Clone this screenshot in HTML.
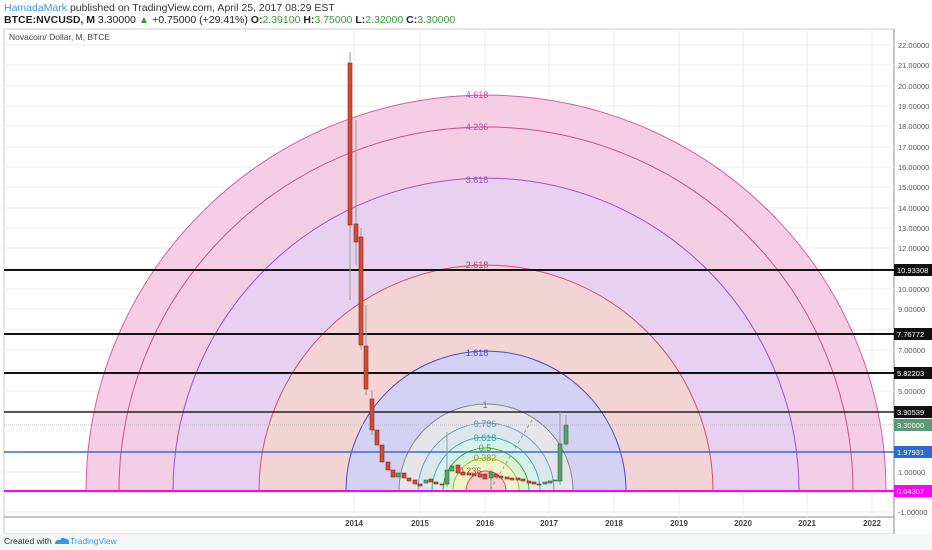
<!DOCTYPE html>
<html><head><meta charset="utf-8"><style>
body{margin:0;width:932px;height:550px;background:#fff;font-family:"Liberation Sans",sans-serif;overflow:hidden;position:relative}
.t{position:absolute;white-space:nowrap}
</style></head><body>
<div class="t" style="left:4px;top:2px;font-size:10.5px;color:#333"><span style="color:#3b9ad9">HamadaMark</span> published on TradingView.com, April 25, 2017 08:29 EST</div>
<div class="t" style="left:4px;top:14px;font-size:10.5px;color:#222"><b>BTCE:NVCUSD, M</b> 3.30000 <span style="color:#3c9a3c">▲</span> +0.75000 (+29.41%) <b>O:</b><span style="color:#3c9a3c">2.39100</span> <b>H:</b><span style="color:#3c9a3c">3.75000</span> <b>L:</b><span style="color:#3c9a3c">2.32000</span> <b>C:</b><span style="color:#3c9a3c">3.30000</span></div>
<svg width="932" height="550" style="position:absolute;left:0;top:0" font-family="Liberation Sans,sans-serif">
<rect x="4" y="29" width="890" height="505" fill="none" stroke="#ccc"/>
<line x1="4" y1="517" x2="894" y2="517" stroke="#888"/>
<line x1="894" y1="29" x2="894" y2="534" stroke="#888"/>
<g stroke="#eee">
<line x1="4" y1="45" x2="894" y2="45"/><line x1="4" y1="65" x2="894" y2="65"/><line x1="4" y1="86" x2="894" y2="86"/><line x1="4" y1="106" x2="894" y2="106"/><line x1="4" y1="126" x2="894" y2="126"/><line x1="4" y1="147" x2="894" y2="147"/><line x1="4" y1="167" x2="894" y2="167"/><line x1="4" y1="187" x2="894" y2="187"/><line x1="4" y1="208" x2="894" y2="208"/><line x1="4" y1="228" x2="894" y2="228"/><line x1="4" y1="248" x2="894" y2="248"/><line x1="4" y1="269" x2="894" y2="269"/><line x1="4" y1="289" x2="894" y2="289"/><line x1="4" y1="309" x2="894" y2="309"/><line x1="4" y1="330" x2="894" y2="330"/><line x1="4" y1="350" x2="894" y2="350"/><line x1="4" y1="370" x2="894" y2="370"/><line x1="4" y1="391" x2="894" y2="391"/><line x1="4" y1="411" x2="894" y2="411"/><line x1="4" y1="431" x2="894" y2="431"/><line x1="4" y1="452" x2="894" y2="452"/><line x1="4" y1="472" x2="894" y2="472"/><line x1="4" y1="492" x2="894" y2="492"/><line x1="4" y1="512" x2="894" y2="512"/>
<line x1="354" y1="29" x2="354" y2="517"/><line x1="420" y1="29" x2="420" y2="517"/><line x1="485" y1="29" x2="485" y2="517"/><line x1="549" y1="29" x2="549" y2="517"/><line x1="614" y1="29" x2="614" y2="517"/><line x1="679" y1="29" x2="679" y2="517"/><line x1="743" y1="29" x2="743" y2="517"/><line x1="807" y1="29" x2="807" y2="517"/><line x1="872" y1="29" x2="872" y2="517"/>
</g>
<g stroke-width="1">
<path d="M86 491 A400 396 0 0 1 886 491Z" fill="#f5cde4" stroke="#d45fa0"/>
<path d="M119 491 A367 364 0 0 1 853 491Z" fill="#f3cde3" stroke="#c8508f"/>
<path d="M173 491 A313 313 0 0 1 799 491Z" fill="#e7d0f0" stroke="#a24fd0"/>
<path d="M259 491 A227 226 0 0 1 713 491Z" fill="#f3d4d4" stroke="#d05070"/>
<path d="M346 491 A140 140 0 0 1 626 491Z" fill="#d4d2f4" stroke="#4a48c8"/>
<path d="M399 491 A87 87 0 0 1 573 491Z" fill="#e6e6ea" stroke="#888"/>
<path d="M418 491 A68 68 0 0 1 554 491Z" fill="#dbe6ee" stroke="#6ba0c8"/>
<path d="M432 491 A54 54 0 0 1 540 491Z" fill="#d6f0ee" stroke="#40b0b0"/>
<path d="M443 491 A43 43 0 0 1 529 491Z" fill="#d8f2d6" stroke="#40b040"/>
<path d="M453 491 A33 33 0 0 1 519 491Z" fill="#eef2c8" stroke="#a8c030"/>
<path d="M466 491 A20 20 0 0 1 506 491Z" fill="#f6d0d0" stroke="#e05050"/>
</g>
<g font-size="9" text-anchor="middle">
<text x="477" y="98" fill="#c050a0">4.618</text><text x="477" y="130" fill="#c050a0">4.236</text><text x="477" y="183" fill="#9a50c8">3.618</text><text x="477" y="268" fill="#c04060">2.618</text><text x="477" y="356" fill="#4a48c8">1.618</text><text x="485" y="408" fill="#777">1</text><text x="485" y="427" fill="#5090c0">0.786</text><text x="485" y="441" fill="#30a0a0">0.618</text><text x="485" y="451" fill="#30a030">0.5</text><text x="485" y="461" fill="#90a020">0.382</text><text x="470" y="474" fill="#d04040">0.236</text>
</g>
<line x1="532" y1="420" x2="490" y2="490" stroke="#999" stroke-dasharray="3,3"/>
<g stroke-width="2">
<line x1="4" y1="270" x2="894" y2="270" stroke="#111"/>
<line x1="4" y1="334" x2="894" y2="334" stroke="#111"/>
<line x1="4" y1="373" x2="894" y2="373" stroke="#111"/>
<line x1="4" y1="412" x2="894" y2="412" stroke="#222" stroke-width="1.5"/>
<line x1="4" y1="452" x2="894" y2="452" stroke="#3a6ad0" stroke-width="1.5"/>
<line x1="4" y1="491" x2="894" y2="491" stroke="#ff00ff"/>
</g>
<line x1="4" y1="425" x2="894" y2="425" stroke="#bbb" stroke-dasharray="1,1"/>
<g stroke="#999" stroke-width="1">
<line x1="350" y1="52" x2="350" y2="300"/><line x1="356" y1="120" x2="356" y2="265"/><line x1="361" y1="228" x2="361" y2="350"/><line x1="366" y1="305" x2="366" y2="395"/><line x1="372" y1="390" x2="372" y2="435"/><line x1="447" y1="432" x2="447" y2="487"/><line x1="560" y1="412" x2="560" y2="485"/><line x1="566" y1="415" x2="566" y2="446"/><line x1="491" y1="470" x2="491" y2="490"/>
</g>
<g fill="#d24a32" stroke="#8a2a1a" stroke-width="0.6">
<rect x="348" y="63" width="4" height="162"/><rect x="354" y="224" width="4" height="18"/><rect x="359" y="237" width="4" height="108"/><rect x="364" y="346" width="4" height="43"/><rect x="370" y="399" width="4" height="31"/><rect x="375" y="430" width="4" height="15"/><rect x="380" y="445" width="4" height="17"/><rect x="386" y="462" width="4" height="8"/><rect x="391" y="470" width="4" height="7"/><rect x="402" y="473" width="4" height="5"/><rect x="407" y="478" width="4" height="3"/><rect x="413" y="480" width="4" height="4"/><rect x="418" y="484" width="4" height="2"/><rect x="429" y="479" width="4" height="3"/><rect x="434" y="482" width="4" height="2"/><rect x="440" y="484" width="4" height="1"/><rect x="456" y="465" width="4" height="8"/><rect x="461" y="472" width="4" height="3"/><rect x="467" y="473" width="4" height="2"/><rect x="472" y="474" width="4" height="2"/><rect x="478" y="474" width="4" height="3"/><rect x="483" y="474" width="4" height="5"/><rect x="494" y="474" width="4" height="3"/><rect x="499" y="476" width="4" height="2"/><rect x="505" y="477" width="4" height="2"/><rect x="510" y="478" width="4" height="2"/><rect x="516" y="478" width="4" height="2"/><rect x="521" y="479" width="4" height="2"/><rect x="527" y="481" width="4" height="2"/><rect x="532" y="482" width="4" height="2"/><rect x="537" y="484" width="4" height="1"/>
</g>
<g fill="#5aa06a" stroke="#2a6a3a" stroke-width="0.6">
<rect x="396" y="473" width="4" height="4"/><rect x="424" y="480" width="4" height="3"/><rect x="445" y="470" width="4" height="14"/><rect x="450" y="466" width="4" height="5"/><rect x="489" y="472" width="4" height="6"/><rect x="543" y="482" width="4" height="2"/><rect x="548" y="481" width="4" height="2"/><rect x="553" y="480" width="4" height="1"/><rect x="558" y="444" width="4" height="37"/><rect x="564" y="425" width="4" height="19"/>
</g>
<g font-size="7.5" fill="#555">
<text x="898" y="48">22.00000</text><text x="898" y="68">21.00000</text><text x="898" y="89">20.00000</text><text x="898" y="109">19.00000</text><text x="898" y="129">18.00000</text><text x="898" y="150">17.00000</text><text x="898" y="170">16.00000</text><text x="898" y="190">15.00000</text><text x="898" y="211">14.00000</text><text x="898" y="231">13.00000</text><text x="898" y="251">12.00000</text><text x="898" y="292">10.00000</text><text x="898" y="312">9.00000</text><text x="898" y="353">7.00000</text><text x="898" y="394">5.00000</text><text x="898" y="475">1.00000</text><text x="898" y="515">-1.00000</text>
</g>
<g font-size="7.5" fill="#fff">
<rect x="894" y="264" width="38" height="12" fill="#111"/><text x="897" y="273">10.93308</text>
<rect x="894" y="328" width="38" height="12" fill="#111"/><text x="897" y="337">7.76772</text>
<rect x="894" y="367" width="38" height="12" fill="#111"/><text x="897" y="376">5.82203</text>
<rect x="894" y="406" width="38" height="12" fill="#111"/><text x="897" y="415">3.90539</text>
<rect x="894" y="419" width="38" height="12" fill="#5a9a78"/><text x="897" y="428">3.30000</text>
<rect x="894" y="446" width="38" height="12" fill="#2a6ad0"/><text x="897" y="455">1.97931</text>
<rect x="894" y="485" width="38" height="12" fill="#ff00ff"/><text x="897" y="494">0.04307</text>
</g>
<g font-size="8" fill="#444" text-anchor="middle" font-weight="bold">
<text x="354" y="526">2014</text><text x="420" y="526">2015</text><text x="485" y="526">2016</text><text x="549" y="526">2017</text><text x="614" y="526">2018</text><text x="679" y="526">2019</text><text x="743" y="526">2020</text><text x="807" y="526">2021</text><text x="872" y="526">2022</text>
</g>
<text x="9" y="40" font-size="8.5" fill="#444">Novacoin/ Dollar, M, BTCE</text>
<rect x="0" y="534" width="932" height="16" fill="#f4f6f8"/>
<text x="4" y="544" font-size="8.5" fill="#333">Created with</text>
<path d="M55 544 q0-5 5-4 q2-4 6-1 q4 0 3 5z" fill="#3b9ad9"/>
<text x="70" y="544" font-size="8.5" fill="#3b9ad9">TradingView</text>
</svg>
</body></html>
